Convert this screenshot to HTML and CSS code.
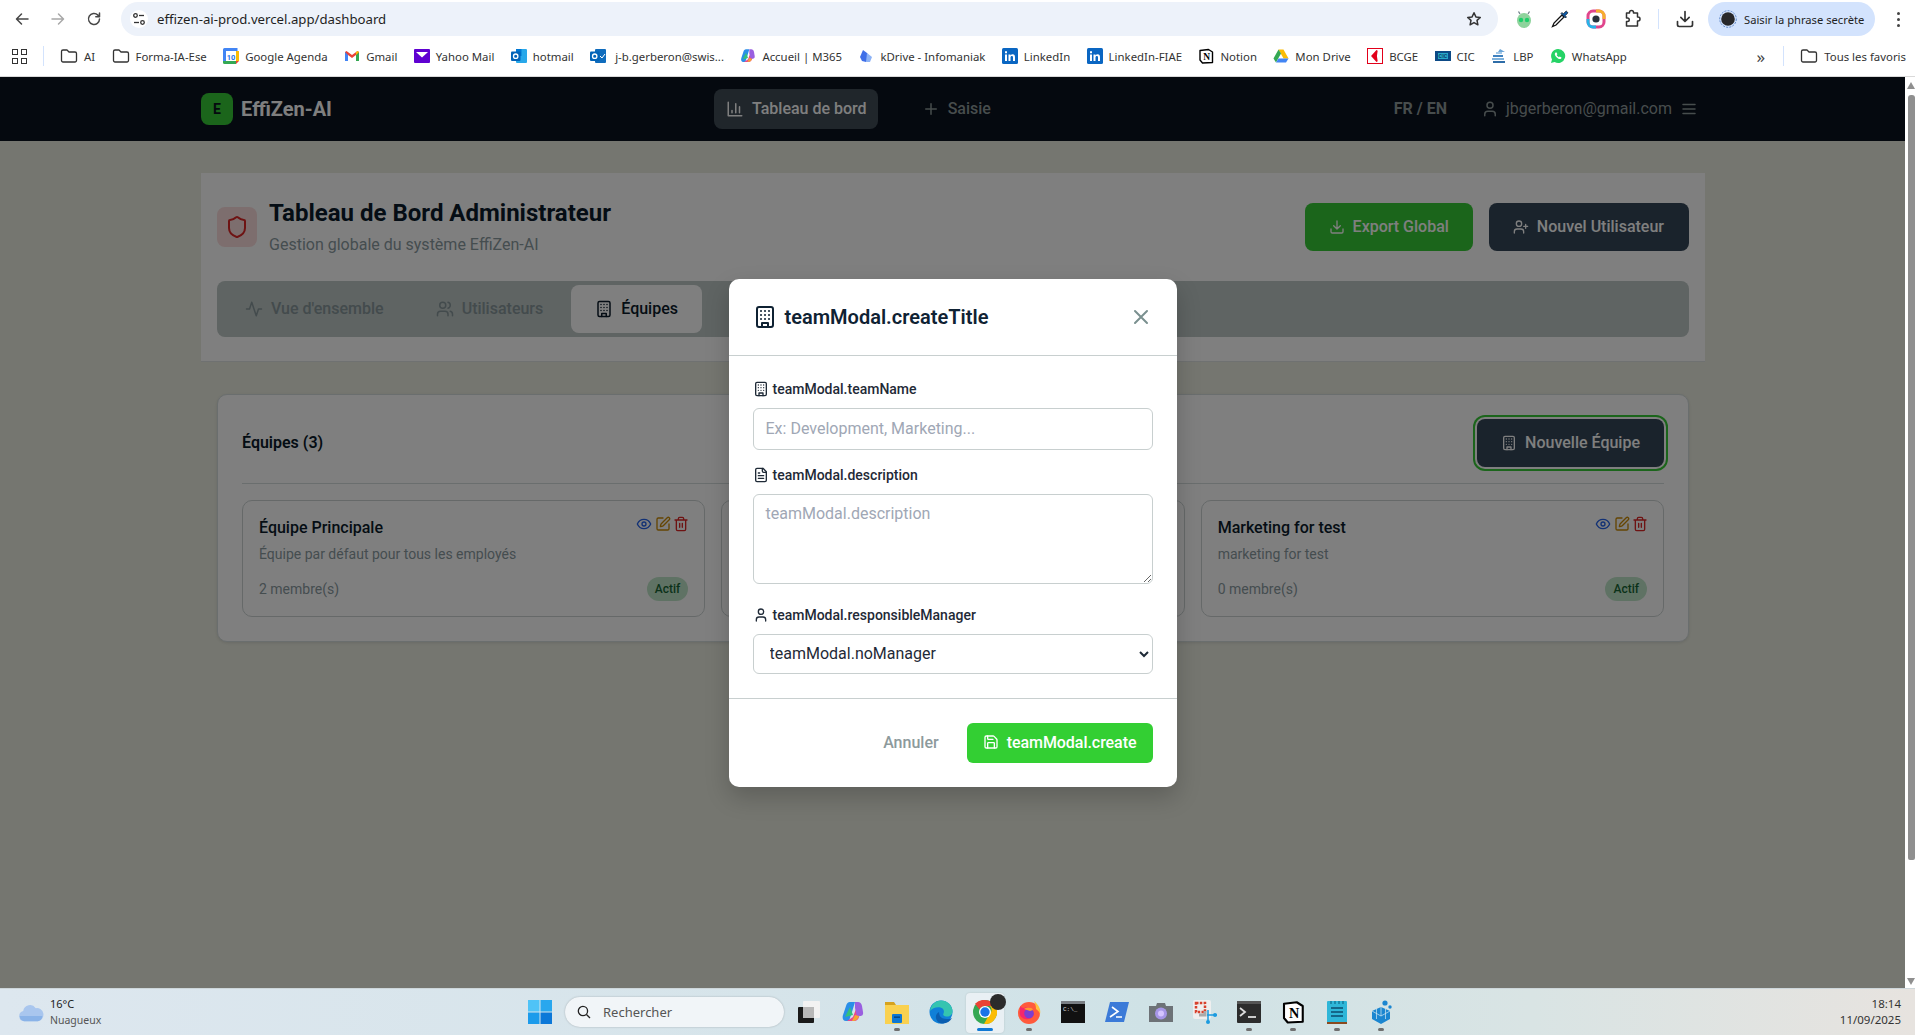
FILE: index.html
```html
<!DOCTYPE html>
<html lang="fr">
<head>
<meta charset="utf-8">
<title>EffiZen-AI</title>
<link rel="stylesheet" href="styles.css">
</head>
<body>
<svg class="defs" aria-hidden="true">
  <defs>
    <symbol id="building" viewBox="0 0 24 24"><rect width="16" height="20" x="4" y="2" rx="2"/><path d="M9 22v-4h6v4M8 6h.01M16 6h.01M12 6h.01M12 10h.01M12 14h.01M16 10h.01M16 14h.01M8 10h.01M8 14h.01"/></symbol>
    <symbol id="file" viewBox="0 0 24 24"><path d="M15 2H6a2 2 0 0 0-2 2v16a2 2 0 0 0 2 2h12a2 2 0 0 0 2-2V7Z"/><path d="M14 2v4a2 2 0 0 0 2 2h4M10 9H8M16 13H8M16 17H8"/></symbol>
    <symbol id="user" viewBox="0 0 24 24"><path d="M19 21v-2a4 4 0 0 0-4-4H9a4 4 0 0 0-4 4v2"/><circle cx="12" cy="7" r="4"/></symbol>
    <symbol id="users" viewBox="0 0 24 24"><path d="M16 21v-2a4 4 0 0 0-4-4H6a4 4 0 0 0-4 4v2"/><circle cx="9" cy="7" r="4"/><path d="M22 21v-2a4 4 0 0 0-3-3.87M16 3.13a4 4 0 0 1 0 7.75"/></symbol>
    <symbol id="userplus" viewBox="0 0 24 24"><path d="M16 21v-2a4 4 0 0 0-4-4H6a4 4 0 0 0-4 4v2"/><circle cx="9" cy="7" r="4"/><path d="M19 8v6M22 11h-6"/></symbol>
    <symbol id="activity" viewBox="0 0 24 24"><path d="M22 12h-4l-3 9L9 3l-3 9H2"/></symbol>
    <symbol id="shield" viewBox="0 0 24 24"><path d="M20 13c0 5-3.5 7.5-7.66 8.95a1 1 0 0 1-.67-.01C7.5 20.5 4 18 4 13V6a1 1 0 0 1 1-1c2 0 4.5-1.2 6.24-2.72a1.17 1.17 0 0 1 1.52 0C14.51 3.81 17 5 19 5a1 1 0 0 1 1 1z"/></symbol>
    <symbol id="download" viewBox="0 0 24 24"><path d="M21 15v4a2 2 0 0 1-2 2H5a2 2 0 0 1-2-2v-4M7 10l5 5 5-5M12 15V3"/></symbol>
    <symbol id="eye" viewBox="0 0 24 24"><path d="M2 12s3-7 10-7 10 7 10 7-3 7-10 7-10-7-10-7Z"/><circle cx="12" cy="12" r="3"/></symbol>
    <symbol id="edit" viewBox="0 0 24 24"><path d="M12 3H5a2 2 0 0 0-2 2v14a2 2 0 0 0 2 2h14a2 2 0 0 0 2-2v-7"/><path d="M18.375 2.625a1 1 0 0 1 3 3l-9.013 9.014a2 2 0 0 1-.853.505l-2.873.84a.5.5 0 0 1-.62-.62l.84-2.873a2 2 0 0 1 .506-.852z"/></symbol>
    <symbol id="trash" viewBox="0 0 24 24"><path d="M3 6h18M19 6v14c0 1-1 2-2 2H7c-1 0-2-1-2-2V6M8 6V4c0-1 1-2 2-2h4c1 0 2 1 2 2v2M10 11v6M14 11v6"/></symbol>
    <symbol id="save" viewBox="0 0 24 24"><path d="M15.2 3a2 2 0 0 1 1.4.6l3.8 3.8a2 2 0 0 1 .6 1.4V19a2 2 0 0 1-2 2H5a2 2 0 0 1-2-2V5a2 2 0 0 1 2-2z"/><path d="M17 21v-7a1 1 0 0 0-1-1H8a1 1 0 0 0-1 1v7M7 3v4a1 1 0 0 0 1 1h7"/></symbol>
    <symbol id="x" viewBox="0 0 24 24"><path d="M18 6 6 18M6 6l12 12"/></symbol>
    <symbol id="plus" viewBox="0 0 24 24"><path d="M5 12h14M12 5v14"/></symbol>
    <symbol id="chart" viewBox="0 0 24 24"><path d="M3 3v18h18M18 17V9M13 17V5M8 17v-3"/></symbol>
    <symbol id="menu" viewBox="0 0 24 24"><path d="M4 6h16M4 12h16M4 18h16"/></symbol>
    <symbol id="folder" viewBox="0 0 18 16"><path d="M1.5 3.5a1.5 1.5 0 0 1 1.5-1.5h4l2 2h6a1.5 1.5 0 0 1 1.5 1.5v7a1.5 1.5 0 0 1-1.5 1.5H3a1.5 1.5 0 0 1-1.5-1.5z"/></symbol>
    <symbol id="back" viewBox="0 0 16 16"><path d="M14 8H3M7.5 3 2.5 8l5 5"/></symbol>
    <symbol id="fwd" viewBox="0 0 16 16"><path d="M2 8h11M8.500 3l5 5-5 5"/></symbol>
    <symbol id="reload" viewBox="0 0 16 16"><path d="M13.500 8a5.500 5.500 0 1 1-1.600-3.900L13.500 5.700M13.500 2v3.700H9.800"/></symbol>
    <symbol id="star" viewBox="0 0 16 16"><path d="m8 1.800 1.900 4.100 4.400.5-3.300 3 .9 4.400L8 11.600l-3.900 2.200.9-4.400-3.300-3 4.400-.5z"/></symbol>
    <symbol id="tune" viewBox="0 0 18 18"><circle cx="5.500" cy="5.500" r="1.800"/><path d="M9 5.500h5"/><circle cx="12.500" cy="12.500" r="1.800"/><path d="M4 12.500h5"/></symbol>
    <symbol id="gcal" viewBox="0 0 16 16"><rect width="16" height="16" rx="1.500" fill="#fff"/><path d="M0 3V1.500A1.500 1.500 0 0 1 1.500 0H14.500V3z" fill="#4285f4"/><path d="M0 3h3v10H0z" fill="#4285f4"/><path d="M13 3h3v10h-3z" fill="#fbbc04"/><path d="M0 13h13v3H1.500A1.500 1.500 0 0 1 0 14.500z" fill="#34a853"/><path d="M13 13h3l-3 3z" fill="#ea4335"/><text x="8" y="11.500" font-size="7.500" text-anchor="middle" fill="#1a73e8" font-family="Roboto" font-weight="700">10</text></symbol>
    <symbol id="gmail" viewBox="0 0 16 16"><path d="M1 4v9h3V7l4 3 4-3v6h3V4l-1.500-1L8 7 2.500 3z" fill="#ea4335"/><path d="M1 4v9h3V7z" fill="#4285f4"/><path d="M12 7v6h3V4z" fill="#34a853"/><path d="M15 4l-1.500-1L12 4.100V7z" fill="#fbbc04"/></symbol>
    <symbol id="yahoo" viewBox="0 0 16 16"><rect y="1" width="16" height="14" rx="1" fill="#5f01d1"/><path d="M2 4h12L8 9.500z" fill="#fff"/></symbol>
    <symbol id="outlook" viewBox="0 0 16 16"><rect x="5" y="1" width="11" height="14" rx="1" fill="#28a8ea"/><rect x="5" y="1" width="5.500" height="7" fill="#0078d4"/><rect y="3.500" width="9.500" height="9.500" rx="1" fill="#0364b8"/><circle cx="4.700" cy="8.200" r="2.200" fill="none" stroke="#fff" stroke-width="1.300"/></symbol>
    <symbol id="outlook2" viewBox="0 0 16 16"><rect x="5" y="1" width="11" height="14" rx="1" fill="#0f6cbd"/><path d="M10 8l2 2 3-4" fill="none" stroke="#fff"/><rect y="3.500" width="9.500" height="9.500" rx="1" fill="#0364b8"/><circle cx="4.700" cy="8.200" r="2.200" fill="none" stroke="#fff" stroke-width="1.300"/></symbol>
    <symbol id="copilot" viewBox="0 0 24 24"><path d="M9 2h5l-3 10-3 9H5c-3 0-4-3-3-6l3-9c.7-2.500 2-4 4-4z" fill="#2a8fe8"/><path d="M6 21h7c3 0 4.500-2 5-4l3-9-6 1-3 8z" fill="#e8488c"/><path d="M14 2h3c2 0 3.500 1.500 4 4l1 6c.5 3-1 4-3 4h-3l-2-8z" fill="#9a5fe0"/><path d="M4 17l5-10 3 8z" fill="#35c07c"/><path d="M11 21l3-6 4 1c-1 3-3 5-7 5z" fill="#f7a531"/></symbol>
    <symbol id="kdrive" viewBox="0 0 16 16"><path d="M5 2l4 3 2 4-3 5-4-1-2-4z" fill="#3f6fe8"/><path d="M9 5l5 4-2 5H8z" fill="#8db3f6"/></symbol>
    <symbol id="linkedin" viewBox="0 0 16 16"><rect width="16" height="16" rx="1.500" fill="#0a66c2"/><path d="M3 6.500h2v6.500H3zM3 3.200h2v2H3zM6.500 6.500h2v1c.5-.8 1.300-1.200 2.200-1.200 1.700 0 2.300 1.100 2.300 2.900V13h-2V9.600c0-.9-.3-1.500-1.100-1.500-.9 0-1.400.6-1.400 1.600V13h-2z" fill="#fff"/></symbol>
    <symbol id="notion" viewBox="0 0 16 16"><path d="M2 2.500 10.500 1.500 14.500 4v10.500L4.500 15 2 12z" fill="#fff" stroke="#000" stroke-width="1.400" stroke-linejoin="round"/><text x="8.800" y="12" font-size="9.500" font-family="Liberation Serif" font-weight="700" text-anchor="middle" fill="#000">N</text></symbol>
    <symbol id="drive" viewBox="0 0 16 16"><path d="M5.500 1.500h5L15.500 10.500h-5z" fill="#fbbc04"/><path d="M5.500 1.500 .5 10.500 3 14.500l5-9z" fill="#34a853"/><path d="M3 14.500h10l2.500-4h-10z" fill="#4285f4"/></symbol>
    <symbol id="bcge" viewBox="0 0 16 16"><rect x=".5" y=".5" width="15" height="15" fill="#fff" stroke="#e2001a"/><path d="M10 2.500 5 8l5 5.500c-1-3.500-1-7.500 0-11z" fill="#e2001a" stroke="#e2001a" stroke-width="1.400"/></symbol>
    <symbol id="cic" viewBox="0 0 16 16"><rect y="3" width="16" height="10" fill="#0d4a86"/><rect x="3" y="5" width="10" height="6" fill="#28a9c9"/><text x="8" y="10" font-size="5.500" font-family="Roboto" font-weight="700" text-anchor="middle" fill="#0d3d6e">CIC</text></symbol>
    <symbol id="lbp" viewBox="0 0 16 16"><path d="M9 1l5 3H7z" fill="#6ca6d8"/><path d="M2 7h10v2H2z" fill="#3f81bf"/><path d="M1 10h12v2H1z" fill="#7fb2dc"/><path d="M2 13h12v2H2z" fill="#2e6da8"/><path d="M5 4h6v2H5z" fill="#a4c8e6"/></symbol>
    <symbol id="whatsapp" viewBox="0 0 16 16"><path d="M8 1a7 7 0 0 0-6 10.500L1 15l3.600-1A7 7 0 1 0 8 1z" fill="#25d366"/><path d="M5.500 4.500c-1.200 1-.8 2.800.8 4.600 1.700 1.900 3.700 2.600 4.900 1.500l.3-1.200-1.800-.9-.8.800c-.8-.3-1.800-1.300-2.200-2.200l.7-.8-.8-1.900z" fill="#fff"/></symbol>
    <symbol id="bug" viewBox="0 0 20 20"><ellipse cx="10" cy="11.500" rx="7" ry="7.500" fill="#8ed39c"/><path d="M6 5 4.500 2.500M14 5l1.500-2.500" stroke="#71808a" stroke-width="1.300"/><circle cx="7" cy="11" r="2.200" fill="#1ecf6a"/><circle cx="13" cy="11" r="2.200" fill="#1ecf6a"/></symbol>
    <symbol id="dropper" viewBox="0 0 20 20"><path d="M12 6 4 14l-1.500 3.500L6 16l8-8z" fill="#fff" stroke="#111" stroke-width="1.300"/><path d="M11 4.500l4.500 4.500 1-1-1.300-1.300L18 3.800 16.200 2 13.300 4.800 12 3.500z" fill="#0e5aa8" stroke="#111" stroke-width=".7"/></symbol>
    <symbol id="colorring" viewBox="0 0 20 20"><rect x="2" y="2" width="16" height="16" rx="5" fill="none" stroke="#e0468c" stroke-width="3"/><path d="M10 2h3a5 5 0 0 1 5 5v3" fill="none" stroke="#f6b02c" stroke-width="3"/><path d="M2 10v3a5 5 0 0 0 5 5h3" fill="none" stroke="#27b4e8" stroke-width="3"/><circle cx="10" cy="10" r="3.600" fill="#28323c"/></symbol>
    <symbol id="puzzle" viewBox="0 0 20 20"><path d="M7 4V3.500a2 2 0 0 1 4 0V4h4v4h.5a2 2 0 0 1 0 4H15v5H4v-4.500h1a1.700 1.700 0 0 0 0-3.500H4V4z" transform="translate(.5 0)"/></symbol>
    <symbol id="savepill" viewBox="0 0 18 18"><circle cx="9" cy="9" r="8.300" fill="none" stroke="#5f88c8" stroke-width="1" stroke-dasharray="2 1.200"/><circle cx="9" cy="9" r="6.800" fill="#28282a"/></symbol>
    <symbol id="cloud" viewBox="0 0 30 24"><path d="M7 22a6 6 0 0 1-1-11.800A8 8 0 0 1 20.500 7 6.500 6.500 0 0 1 23 22z" fill="#a9c6ee"/><path d="M2 16h26a6 6 0 0 1-5 6H7a6 6 0 0 1-5-6z" fill="#8ab3e8"/></symbol>
    <symbol id="search" viewBox="0 0 16 16"><circle cx="6.800" cy="6.800" r="5.300"/><path d="m10.800 10.800 4 4"/></symbol>
    <symbol id="winlogo" viewBox="0 0 24 24"><rect width="11.500" height="11.500" fill="#4fc3f7"/><rect x="12.500" width="11.500" height="11.500" fill="#29a7ee"/><rect y="12.500" width="11.500" height="11.500" fill="#1b9beb"/><rect x="12.500" y="12.500" width="11.500" height="11.500" fill="#0c78d8"/></symbol>
    <symbol id="taskview" viewBox="0 0 24 24"><rect x="6" y="1" width="17" height="17" rx="1" fill="#f2f2f2"/><rect x="1" y="7" width="16" height="16" rx="1" fill="#1a1a1a"/><rect x="6" y="7" width="11" height="11" fill="#b8b8b8"/></symbol>
    <symbol id="explorer" viewBox="0 0 24 24"><path d="M0 2h9l2 3H0z" fill="#d6a21e"/><rect y="5" width="24" height="19" fill="#fad14f"/><rect x="7" y="14" width="10" height="9" rx="1" fill="#0f78d4"/><rect x="9" y="16.500" width="6" height="1.300" fill="#063f78"/></symbol>
    <symbol id="edge" viewBox="0 0 24 24"><circle cx="12" cy="12" r="11.500" fill="#1080d8"/><path d="M1 11C2 4 7 .5 12 .5c6 0 11.500 4.500 11.500 11 0 3-2.500 5-5.500 5-3 0-4.500-1.500-3.500-3 1-2 .5-5-3-6-3.500-1-8.500.5-10.500 3.500z" fill="#35c4b0"/><path d="M9 22c-3-3-3-8 1-10 0 4 2 7 8 7 2 0 3 0 5-1-2 3-5 5.500-9 5.500-2 0-3.500-.5-5-1.500z" fill="#0b5eb0"/></symbol>
    <symbol id="chrome" viewBox="0 0 24 24"><circle cx="12" cy="12" r="12" fill="#34a853"/><path d="M12 0a12 12 0 0 1 10.400 6H12a6 6 0 0 0-5.500 3.500L2 3.800A12 12 0 0 1 12 0z" fill="#ea4335"/><path d="M22.400 6A12 12 0 0 1 11 24l5-9a6 6 0 0 0 1-9z" fill="#fbbc04"/><circle cx="12" cy="12" r="6" fill="#fff"/><circle cx="12" cy="12" r="4.700" fill="#1a73e8"/></symbol>
    <symbol id="firefox" viewBox="0 0 24 24"><circle cx="12" cy="13" r="11" fill="#ff5a3c"/><path d="M17 1c5 4 7 9 6 13-1-3-3-4-4-5 0-3-1-6-2-8z" fill="#ffc13c"/><path d="M3 6c1 1 2 2 4 2 3-2 6-1 8 1l2 5c-1 4-5 6-9 5-4-1-6-4-5-8z" fill="#f5276c"/><circle cx="12" cy="13.500" r="4.800" fill="#7b3fd0"/><path d="M7 9c3-2 8-2 9 1l-3 1c-2-1-4-1-6-2z" fill="#ff9a2e"/></symbol>
    <symbol id="cmd" viewBox="0 0 24 24"><rect y="1" width="24" height="22" fill="#111"/><rect y="1" width="24" height="3" fill="#7a7f84"/><text x="2" y="11" font-size="6" fill="#ddd" font-family="Liberation Mono">C:\_</text></symbol>
    <symbol id="ps" viewBox="0 0 24 24"><path d="M5 2h19l-5 20H0z" fill="#3b7ad8"/><path d="M7 7l6 4.500L5 17M11 17h6" fill="none" stroke="#fff" stroke-width="1.600"/></symbol>
    <symbol id="camera" viewBox="0 0 24 24"><path d="M0 6h7l1-3h8l1 3h7v16H0z" fill="#6d7277"/><circle cx="12" cy="13.500" r="6" fill="#a696e8"/><circle cx="12" cy="13.500" r="3" fill="#d4c4ff"/></symbol>
    <symbol id="snip" viewBox="0 0 24 24"><rect width="18" height="19" rx="2" fill="#efefef"/><path d="M3 3h9v9H3z" fill="none" stroke="#d8412c" stroke-width="2.500" stroke-dasharray="2.500 1.300"/><path d="M12 11v4H6" fill="none" stroke="#aaa" stroke-width="3"/><path d="M15 10v13M14 15h10" stroke="#1b9be0" stroke-width="1.500"/><circle cx="22" cy="15" r="2" fill="#1b9be0"/><circle cx="15" cy="22" r="2" fill="#1b9be0"/></symbol>
    <symbol id="term" viewBox="0 0 24 24"><rect y="1" width="24" height="22" rx="1" fill="#2c2c2c"/><rect y="1" width="24" height="3" fill="#555"/><path d="M3 8l5 4-5 4" fill="none" stroke="#ddd" stroke-width="1.800"/><path d="M11 17h8" stroke="#ddd" stroke-width="1.800"/></symbol>
    <symbol id="notepad" viewBox="0 0 24 24"><rect x="2" y="1" width="20" height="23" rx="1" fill="#2fb6d8"/><path d="M2 22h20v2H2z" fill="#8a4a1f"/><path d="M6 8h12M6 12h12M6 16h12" stroke="#0d4c6e" stroke-width="1.700"/><path d="M6 1v3M10 1v3M14 1v3M18 1v3" stroke="#0d6c8e" stroke-width="1.200"/></symbol>
    <symbol id="cube" viewBox="0 0 24 24"><path d="M12 7l9 4v8l-9 5-9-5v-8z" fill="#1b86d0"/><path d="M12 7v9M3 11l9 5 9-5M7.500 9v10M16.500 9v10" stroke="#d6eaf2" stroke-width=".7" fill="none"/><circle cx="16" cy="3" r="2.600" fill="#1b86d0"/><circle cx="21" cy="7" r="1.700" fill="#1b86d0"/></symbol>
  </defs>
</svg>

<div class="toolbar">
  <div class="navbtns">
    <svg class="tb-ico"><use href="#back"/></svg>
    <svg class="tb-ico faded"><use href="#fwd"/></svg>
    <svg class="tb-ico"><use href="#reload"/></svg>
  </div>
  <div class="omnibox">
    <span class="siteinfo"><svg class="tune"><use href="#tune"/></svg></span>
    <span class="url">effizen-ai-prod.vercel.app/dashboard</span>
    <svg class="tb-ico star"><use href="#star"/></svg>
  </div>
  <div class="exts">
    <svg class="ext"><use href="#bug"/></svg>
    <svg class="ext"><use href="#dropper"/></svg>
    <svg class="ext"><use href="#colorring"/></svg>
    <svg class="ext outline"><use href="#puzzle"/></svg>
    <span class="tb-sep"></span>
    <svg class="ext outline thick"><use href="#download"/></svg>
  </div>
  <div class="profile"><svg class="avatar"><use href="#savepill"/></svg><span>Saisir la phrase secrète</span></div>
  <div class="dots"><i></i><i></i><i></i></div>
</div>

<div class="bookmarks">
  <div class="apps"><i></i><i></i><i></i><i></i></div>
  <span class="bm-sep"></span>
  <a class="bm"><svg class="fold"><use href="#folder"/></svg>AI</a>
  <a class="bm"><svg class="fold"><use href="#folder"/></svg>Forma-IA-Ese</a>
  <a class="bm"><svg class="fav"><use href="#gcal"/></svg>Google Agenda</a>
  <a class="bm"><svg class="fav"><use href="#gmail"/></svg>Gmail</a>
  <a class="bm"><svg class="fav"><use href="#yahoo"/></svg>Yahoo Mail</a>
  <a class="bm"><svg class="fav"><use href="#outlook"/></svg>hotmail</a>
  <a class="bm wide"><svg class="fav"><use href="#outlook2"/></svg>j-b.gerberon@swis...</a>
  <a class="bm"><svg class="fav"><use href="#copilot"/></svg>Accueil | M365</a>
  <a class="bm"><svg class="fav"><use href="#kdrive"/></svg>kDrive - Infomaniak</a>
  <a class="bm"><svg class="fav"><use href="#linkedin"/></svg>LinkedIn</a>
  <a class="bm"><svg class="fav"><use href="#linkedin"/></svg>LinkedIn-FIAE</a>
  <a class="bm"><svg class="fav"><use href="#notion"/></svg>Notion</a>
  <a class="bm"><svg class="fav"><use href="#drive"/></svg>Mon Drive</a>
  <a class="bm"><svg class="fav"><use href="#bcge"/></svg>BCGE</a>
  <a class="bm"><svg class="fav"><use href="#cic"/></svg>CIC</a>
  <a class="bm"><svg class="fav"><use href="#lbp"/></svg>LBP</a>
  <a class="bm"><svg class="fav"><use href="#whatsapp"/></svg>WhatsApp</a>
  <span class="chev">»</span>
  <span class="bm-sep"></span>
  <a class="bm last"><svg class="fold"><use href="#folder"/></svg>Tous les favoris</a>
</div>

<div class="viewport">
  <div class="page">
    <header class="app-header">
      <div class="brand"><span class="logo">E</span><span class="brand-name">EffiZen-AI</span></div>
      <nav class="nav">
        <a class="nav-item active"><svg class="ic18"><use href="#chart"/></svg>Tableau de bord</a>
        <a class="nav-item"><svg class="ic18"><use href="#plus"/></svg>Saisie</a>
      </nav>
      <div class="account">
        <span class="lang">FR / EN</span>
        <svg class="ic18 user-ic"><use href="#user"/></svg>
        <span class="email">jbgerberon@gmail.com</span>
        <svg class="ic18"><use href="#menu"/></svg>
      </div>
    </header>

    <main class="main">
      <section class="admin-panel">
        <div class="admin-top">
          <div class="shield-box"><svg class="ic24"><use href="#shield"/></svg></div>
          <div class="admin-titles">
            <h1>Tableau de Bord Administrateur</h1>
            <p>Gestion globale du système EffiZen-AI</p>
          </div>
          <div class="admin-actions">
            <button class="btn green"><svg class="ic16"><use href="#download"/></svg>Export Global</button>
            <button class="btn dark"><svg class="ic16"><use href="#userplus"/></svg>Nouvel Utilisateur</button>
          </div>
        </div>
        <div class="tabs">
          <a class="tab"><svg class="ic18"><use href="#activity"/></svg>Vue d'ensemble</a>
          <a class="tab"><svg class="ic18"><use href="#users"/></svg>Utilisateurs</a>
          <a class="tab on"><svg class="ic18"><use href="#building"/></svg>Équipes</a>
        </div>
      </section>

      <section class="teams">
        <div class="teams-head">
          <h2>Équipes (3)</h2>
          <button class="btn dark focus"><svg class="ic16"><use href="#building"/></svg>Nouvelle Équipe</button>
        </div>
        <div class="team-grid">
          <article class="team">
            <div class="team-top">
              <h3>Équipe Principale</h3>
              <div class="team-acts">
                <svg class="ic16 blue"><use href="#eye"/></svg>
                <svg class="ic16 amber"><use href="#edit"/></svg>
                <svg class="ic16 red"><use href="#trash"/></svg>
              </div>
            </div>
            <p class="team-desc">Équipe par défaut pour tous les employés</p>
            <div class="team-foot"><span>2 membre(s)</span><span class="badge">Actif</span></div>
          </article>
          <article class="team"></article>
          <article class="team">
            <div class="team-top">
              <h3>Marketing for test</h3>
              <div class="team-acts">
                <svg class="ic16 blue"><use href="#eye"/></svg>
                <svg class="ic16 amber"><use href="#edit"/></svg>
                <svg class="ic16 red"><use href="#trash"/></svg>
              </div>
            </div>
            <p class="team-desc">marketing for test</p>
            <div class="team-foot"><span>0 membre(s)</span><span class="badge">Actif</span></div>
          </article>
        </div>
      </section>
    </main>

    <div class="overlay">
      <form class="modal">
        <div class="modal-head">
          <svg class="ic24"><use href="#building"/></svg>
          <h2>teamModal.createTitle</h2>
          <svg class="ic24 close"><use href="#x"/></svg>
        </div>
        <div class="modal-body">
          <label class="lbl"><svg class="ic16"><use href="#building"/></svg>teamModal.teamName</label>
          <input class="field" type="text" placeholder="Ex: Development, Marketing...">
          <label class="lbl"><svg class="ic16"><use href="#file"/></svg>teamModal.description</label>
          <textarea class="field area" placeholder="teamModal.description"></textarea>
          <label class="lbl"><svg class="ic16"><use href="#user"/></svg>teamModal.responsibleManager</label>
          <select class="field sel"><option>teamModal.noManager</option></select>
        </div>
        <div class="modal-foot">
          <button type="button" class="cancel">Annuler</button>
          <button type="button" class="create"><svg class="ic16"><use href="#save"/></svg>teamModal.create</button>
        </div>
      </form>
    </div>
  </div>
  <div class="scrollbar">
    <i class="arrow-up"></i>
    <i class="thumb"></i>
    <i class="arrow-down"></i>
  </div>
</div>

<footer class="taskbar">
  <div class="weather">
    <svg class="cloud"><use href="#cloud"/></svg>
    <div class="weather-txt"><span>16°C</span><span class="muted">Nuagueux</span></div>
  </div>
  <span class="slot"><svg class="tk"><use href="#winlogo"/></svg></span>
  <div class="searchbox"><svg class="search-ic"><use href="#search"/></svg>Rechercher</div>
  <span class="slot"><svg class="tk"><use href="#taskview"/></svg></span>
  <span class="slot"><svg class="tk"><use href="#copilot"/></svg></span>
  <span class="slot run"><svg class="tk"><use href="#explorer"/></svg></span>
  <span class="slot"><svg class="tk"><use href="#edge"/></svg></span>
  <span class="slot current"><svg class="tk"><use href="#chrome"/></svg><i class="notif"></i></span>
  <span class="slot run"><svg class="tk"><use href="#firefox"/></svg></span>
  <span class="slot"><svg class="tk"><use href="#cmd"/></svg></span>
  <span class="slot"><svg class="tk"><use href="#ps"/></svg></span>
  <span class="slot"><svg class="tk"><use href="#camera"/></svg></span>
  <span class="slot"><svg class="tk"><use href="#snip"/></svg></span>
  <span class="slot run"><svg class="tk"><use href="#term"/></svg></span>
  <span class="slot run"><svg class="tk"><use href="#notion"/></svg></span>
  <span class="slot run"><svg class="tk"><use href="#notepad"/></svg></span>
  <span class="slot run"><svg class="tk"><use href="#cube"/></svg></span>
  <div class="clock"><span>18:14</span><span>11/09/2025</span></div>
</footer>
</body>
</html>
```

FILE: styles.css
```css
* { box-sizing: border-box; }
html, body { height: 100%; }
body {
  margin: 0;
  display: flex;
  flex-direction: column;
  overflow: hidden;
  font-family: Roboto, "Liberation Sans", sans-serif;
  background: #fff;
}
.defs { position: absolute; width: 0; height: 0; }
svg { display: block; flex: none; }
h1, h2, h3, p { margin: 0; }

/* icon sizes */
.ic16, .ic18, .ic24, .tb-ico, .fold, .outline {
  fill: none;
  stroke: currentColor;
  stroke-width: 2;
  stroke-linecap: round;
  stroke-linejoin: round;
}
.ic16 { width: 16px; height: 16px; }
.ic18 { width: 18px; height: 18px; }
.ic24 { width: 24px; height: 24px; }

/* browser toolbar */
.toolbar {
  height: 38px;
  display: flex;
  align-items: center;
  padding-left: 14px;
  flex: none;
  font-family: "Noto Sans", sans-serif;
  color: #1f1f1f;
}
.navbtns { display: flex; gap: 20px; width: 107px; }
.tb-ico { width: 16px; height: 16px; color: #474747; stroke-width: 1.5; }
.tb-ico.faded { color: #a8a8a8; }
.omnibox {
  width: 1377px;
  height: 34px;
  border-radius: 17px;
  background: #edf2fa;
  display: flex;
  align-items: center;
  padding: 0 16px 0 9px;
}
.siteinfo {
  width: 18px;
  height: 18px;
  border-radius: 50%;
  background: #fff;
  margin-right: 9px;
}
.tune {
  width: 18px;
  height: 18px;
  fill: none;
  stroke: #333;
  stroke-width: 1.300;
}
.url { font-size: 13.200px; flex: 1; }
.star { color: #333; }
.exts {
  display: flex;
  align-items: center;
  width: 210px;
  padding-left: 16px;
  gap: 16px;
}
.ext { width: 20px; height: 20px; }
.outline { color: #333; stroke-width: 1.500; }
.thick { stroke-width: 2; margin-left: 1px; }
.tb-sep { width: 1px; height: 20px; background: #d3e3fd; margin: 0 -1px 0 0; }
.profile {
  width: 167px;
  height: 34px;
  border-radius: 17px;
  background: #d3e3fd;
  display: flex;
  align-items: center;
  gap: 7px;
  padding-left: 11px;
  font-size: 11.200px;
}
.avatar { width: 18px; height: 18px; }
.dots { display: flex; flex-direction: column; gap: 3px; margin-left: 22px; }
.dots i { width: 3px; height: 3px; border-radius: 50%; background: #444; }

/* bookmarks */
.bookmarks {
  height: 39px;
  flex: none;
  display: flex;
  align-items: center;
  padding: 0 0 2px 12px;
  border-bottom: 1px solid #d9d9d9;
  font-family: "Noto Sans", sans-serif;
  font-size: 11.400px;
  color: #333;
  white-space: nowrap;
}
.apps { display: grid; grid-template-columns: 6px 6px; gap: 3px; margin-right: 16px; }
.apps i { width: 6px; height: 6px; border: 1.500px solid #333; }
.bm-sep { width: 1px; height: 20px; background: #d3e3fd; margin-right: 16px; }
.bm { display: flex; align-items: center; gap: 6px; margin-right: 16.400px; }
.bm.wide { gap: 9px; }
.fold { width: 18px; height: 16px; color: #333; stroke-width: 1.300; }
.fav { width: 16px; height: 16px; }
.chev { margin-left: auto; margin-right: 18px; font-size: 17px; line-height: 1; color: #444; }
.bm.last { margin-right: 9px; }

/* viewport */
.viewport { flex: 1; display: flex; min-height: 0; }
.page { flex: 1; position: relative; background: #eaece0; overflow: hidden; }
.scrollbar {
  width: 10px;
  background: #fff;
  display: flex;
  flex-direction: column;
  align-items: flex-end;
}
.arrow-up {
  width: 0; height: 0;
  margin: 5px 0 0 0;
  border: 4px solid transparent;
  border-top: 0;
  border-bottom: 7px solid #8f8f8f;
}
.thumb { width: 7px; height: 765px; margin-top: 6px; background: #8f8f8f; border-radius: 3px 3px 2px 2px; }
.arrow-down {
  width: 0; height: 0;
  margin-top: auto;
  margin-bottom: 3px;
  border: 4px solid transparent;
  border-bottom: 0;
  border-top: 7px solid #8f8f8f;
}

/* app header */
.app-header {
  height: 64px;
  background: #0a121e;
  display: flex;
  align-items: center;
  padding: 0 207px 0 201px;
  color: #fff;
}
.brand { display: flex; align-items: center; gap: 8px; width: 513px; }
.logo {
  width: 32px; height: 32px;
  border-radius: 8px;
  background: #36ca36;
  color: #0a121e;
  font-weight: 700;
  font-size: 14px;
  display: flex; align-items: center; justify-content: center;
}
.brand-name { font-size: 20px; font-weight: 700; padding-bottom: 1px; }
.nav { display: flex; gap: 32px; }
.nav-item {
  height: 40px;
  display: flex;
  align-items: center;
  gap: 8px;
  padding: 0 11px 1px 12px;
  border-radius: 8px;
  font-size: 16px;
  font-weight: 500;
  color: #8f9a9a;
}
.nav-item.active { background: #404c56; color: #fff; }
.account { margin-left: auto; display: flex; align-items: center; color: #8f9a9a; font-size: 16px; padding-bottom: 1px; }
.lang { font-weight: 700; margin-right: 34px; }
.user-ic { margin-right: 7px; }
.email { margin-right: 8px; }

/* main */
.main { width: 1504px; margin-left: 201px; padding-top: 32px; }
.admin-panel {
  background: #fff;
  padding: 24px 16px;
  border-bottom: 1px solid #dfe2e2;
}
.admin-top { display: flex; align-items: center; }
.shield-box {
  width: 40px; height: 40px;
  border-radius: 8px;
  background: #fbdcdc;
  color: #dc2626;
  display: flex; align-items: center; justify-content: center;
  margin-right: 12px;
}
.admin-titles h1 { font-size: 24px; line-height: 32px; font-weight: 700; color: #0a1a2a; }
.admin-titles p { font-size: 16px; line-height: 24px; margin-top: 4px; color: #8a9a9f; }
.admin-actions { margin-left: auto; display: flex; gap: 16px; }
.admin-actions .dark { padding-right: 25px; }
.btn {
  height: 48px;
  padding: 0 24px 1px;
  border: 0;
  border-radius: 8px;
  display: flex;
  align-items: center;
  gap: 8px;
  font-family: inherit;
  font-size: 16px;
  font-weight: 500;
  color: #fff;
}
.btn.green { background: #36ca36; }
.btn.dark { background: #344658; }
.btn.focus { box-shadow: 0 0 0 2px #fff, 0 0 0 4px #36ca36; }
.tabs {
  margin-top: 24px;
  height: 56px;
  background: #bec8c6;
  border-radius: 8px;
  padding: 4px;
  display: flex;
  gap: 4px;
}
.tab {
  display: flex;
  align-items: center;
  gap: 8px;
  padding: 0 24px 1px;
  border-radius: 8px;
  font-size: 16px;
  font-weight: 500;
  color: #87969a;
}
.tab.on { background: #fff; color: #0a1a2a; }

.teams {
  margin: 32px 16px 0;
  background: #fff;
  border: 1px solid #d4dcdc;
  border-radius: 10px;
  padding: 24px;
  box-shadow: 0 1px 3px rgba(0,0,0,.1);
}
.teams-head {
  display: flex;
  align-items: center;
  justify-content: space-between;
  padding-bottom: 16px;
  border-bottom: 1px solid #d4dcdc;
}
.teams-head h2 { font-size: 16px; line-height: 22px; padding-bottom: 1px; font-weight: 600; color: #0a1a2a; }
.team-grid {
  margin-top: 16px;
  display: grid;
  grid-template-columns: repeat(3, 1fr);
  gap: 16px;
}
.team {
  border: 1px solid #ccd3d3;
  border-radius: 10px;
  padding: 16px 16px 15px;
}
.team-top { display: flex; justify-content: space-between; height: 24px; }
.team-top h3 { font-size: 16px; line-height: 22px; font-weight: 500; color: #0a1a2a; }
.team-acts { display: flex; gap: 2.500px; margin: -1px -1px 0 0; }
.blue { color: #2563eb; }
.amber { color: #ca8a04; }
.red { color: #dc2626; }
.team-desc { font-size: 14px; line-height: 20px; margin-top: 3px; color: #8a9a9f; }
.team-foot {
  margin-top: 13px;
  display: flex;
  justify-content: space-between;
  align-items: center;
  font-size: 14px;
  color: #8a9a9f;
}
.badge {
  height: 24px;
  padding: 0 8px;
  border-radius: 12px;
  background: #bfe5c8;
  color: #166534;
  font-size: 12px;
  font-weight: 500;
  display: flex;
  align-items: center;
}

/* modal */
.overlay {
  position: absolute;
  inset: 0;
  background: rgba(0,0,0,.5);
  display: flex;
  align-items: center;
  justify-content: center;
}
.modal {
  width: 448px;
  background: #fff;
  border-radius: 10px;
  box-shadow: 0 10px 25px rgba(0,0,0,.2);
  color: #1f2a37;
}
.modal-head {
  height: 77px;
  display: flex;
  align-items: center;
  gap: 8px;
  padding: 0 24px;
  border-bottom: 1px solid #c8cfcf;
  color: #0f2233;
}
.modal-head h2 { font-size: 20px; font-weight: 600; flex: 1; }
.close { color: #7a908f; }
.modal-body { padding: 23px 24px 24px; display: flex; flex-direction: column; }
.lbl {
  height: 20px;
  display: flex;
  align-items: center;
  gap: 4px;
  font-size: 14px;
  font-weight: 500;
  margin-bottom: 9px;
}
.field {
  width: 100%;
  border: 1px solid #c8cfcf;
  border-radius: 6px;
  background: #fff;
  font-family: inherit;
  font-size: 16px;
  color: #1f2a37;
  padding: 0 11px 0 12px;
  height: 42px;
  margin-bottom: 15px;
  outline: none;
}
.field::placeholder { color: #a0a7b5; }
.area { height: 90px; padding: 9px 12px; margin-bottom: 21px; display: block; resize: vertical; }
.sel { height: 40px; margin-bottom: 0; padding: 0 11px 0 12px; }
.modal-foot {
  height: 89px;
  border-top: 1px solid #c8cfcf;
  display: flex;
  align-items: center;
  justify-content: flex-end;
  padding: 0 24px;
  gap: 16px;
}
.cancel {
  border: 0;
  background: none;
  font-family: inherit;
  font-size: 16px;
  font-weight: 500;
  color: #8d9a9c;
  padding: 0 12px 1px;
}
.create {
  height: 40px;
  padding: 0 16px 1px 16px;
  border: 0;
  border-radius: 6px;
  background: #33cf33;
  color: #fff;
  font-family: inherit;
  font-size: 16px;
  font-weight: 500;
  letter-spacing: -.05px;
  display: flex;
  align-items: center;
  gap: 8px;
}

/* taskbar */
.taskbar {
  height: 47px;
  flex: none;
  display: flex;
  align-items: center;
  background: linear-gradient(90deg, #dde7ef 0%, #d6e4ea 40%, #cfe2e6 60%, #d9e4e4 80%, #e7e3df 100%);
  font-family: "Noto Sans", sans-serif;
  font-size: 12px;
  color: #222;
  border-top: 1px solid #cdd6da;
}
.weather { width: 518px; display: flex; align-items: center; padding-left: 18px; gap: 6px; }
.cloud { width: 26px; height: 21px; }
.weather-txt { display: flex; flex-direction: column; font-size: 11px; line-height: 16px; }
.muted { color: #555; font-size: 10.500px; }
.slot {
  width: 44px;
  height: 46px;
  display: flex;
  align-items: center;
  justify-content: center;
  position: relative;
}
.tk { width: 24px; height: 24px; }
.run::after, .current::after {
  content: "";
  position: absolute;
  left: 50%;
  bottom: 4px;
  width: 6px;
  height: 3px;
  margin-left: -3px;
  border-radius: 2px;
  background: #6f6f6f;
}
.current::before {
  content: "";
  position: absolute;
  left: 3px;
  right: 3px;
  top: 4px;
  bottom: 2px;
  border-radius: 4px;
  background: #e9f0f4;
  box-shadow: 0 0 2px rgba(0,0,0,.15);
}
.current .tk { position: relative; }
.current::after { width: 16px; margin-left: -8px; background: #0f78d4; }
.notif {
  position: absolute;
  top: 5px;
  left: 27px;
  width: 16px;
  height: 16px;
  border-radius: 50%;
  background: #2b2b2b;
}
.searchbox {
  width: 219px;
  height: 30px;
  margin: 0 3px;
  border-radius: 15px;
  background: #f1f5f8;
  box-shadow: 0 0 2px rgba(0,0,0,.25);
  display: flex;
  align-items: center;
  gap: 12px;
  padding-left: 12px;
  font-size: 13px;
  color: #555;
}
.search-ic { width: 14px; height: 14px; fill: none; stroke: #222; stroke-width: 1.500; }
.clock {
  margin-left: auto;
  padding-right: 14px;
  display: flex;
  flex-direction: column;
  align-items: flex-end;
  font-size: 11.500px;
  line-height: 16px;
  color: #333;
}
```
